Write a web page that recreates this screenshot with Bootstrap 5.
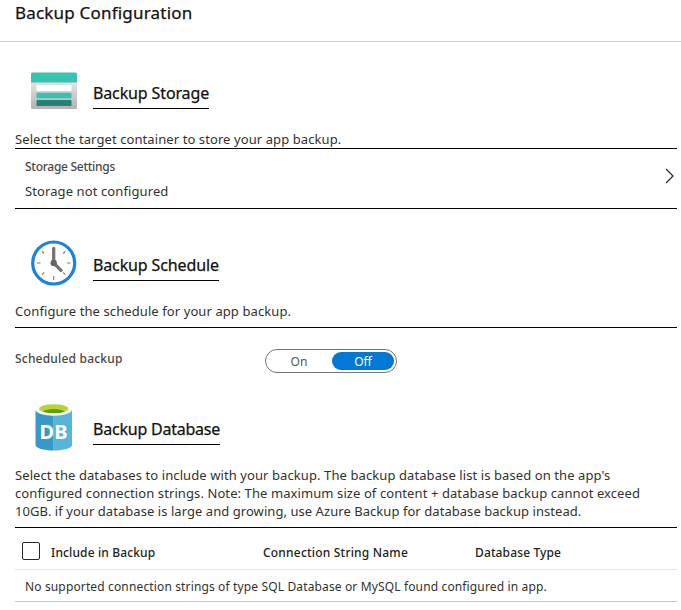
<!DOCTYPE html>
<html lang="en">
<head>
<meta charset="utf-8">
<title>Backup Configuration</title>
<link href="https://cdn.jsdelivr.net/npm/bootstrap@5.3.0/dist/css/bootstrap.min.css" rel="stylesheet">
<style>
body{font-family:"Noto Sans","Open Sans",sans-serif;font-size:13px;line-height:18px;color:#323130;background:#fff;overflow:hidden}
.page-head{height:42px;padding-left:15px;border-bottom:1px solid #d2d0ce}
.page-head h1{font-size:17px;line-height:26px;letter-spacing:.2px;color:#111;-webkit-text-stroke:.25px #111}
.page-body{padding:0 4px 0 15px}
.sect-head{padding-left:16px}
.sect-icon{width:46px;height:48px;margin-right:16px}
.sect-title{font-size:16px;line-height:24px;color:#111;border-bottom:1px solid #000;padding-bottom:3px;letter-spacing:-.13px;-webkit-text-stroke:.25px #111}
.head-storage{height:60px;margin-top:28px}
.head-schedule{height:63px;margin-top:30px}
.head-db{height:63px;margin-top:30px}
.title-storage{margin-top:11px}
.title-schedule{margin-top:14px}
.title-db{margin-top:14px;letter-spacing:-.22px}
.copy{letter-spacing:.09px;white-space:nowrap}
.rule{border-bottom:1px solid #000}
.schedule-copy{padding-bottom:7px}
.setting{height:60px;padding:9px 2px 0 10px}
.lbl{font-size:12px;font-weight:500;color:#484644}
.lbl-storage{letter-spacing:-.27px}
.lbl-sched{letter-spacing:.2px;padding-top:1px}
.value{letter-spacing:.1px;margin-top:6px}
.sched-row{height:45px;padding-top:21px}
.sched-row .lbl{width:250px}
.toggle{width:132px;height:24px;border:1px solid #767472;border-radius:12px;padding:2px;font-size:12px}
.toggle .opt{width:62px;height:18px;line-height:19px;text-align:center;border-radius:9px}
.toggle .opt-on{color:#555}
.toggle .opt-off{background:#0078d4;color:#fff}
.db-copy{height:62px}
.grid-head{height:42px;border-bottom:1px solid #e6e6e6;font-size:12px;font-weight:500;letter-spacing:.13px;color:#222;padding:5px 0 0 7px}
.grid-head span:not(.box){padding-top:4px}
.box{width:18px;height:18px;border:1px solid #292827;border-radius:2px;margin-right:11px}
.col-a{width:212px}
.col-b{width:212px;letter-spacing:.2px}
.empty-row{height:32px;padding:8px 0 0 10px;border-bottom:1px solid #c8c6c4;font-size:12px;letter-spacing:.14px;white-space:nowrap}
.line-c{letter-spacing:.055px}
</style>
<script src="https://cdn.jsdelivr.net/npm/bootstrap@5.3.0/dist/js/bootstrap.bundle.min.js"></script>
</head>
<body>
<header class="page-head"><h1 class="m-0 fw-normal">Backup Configuration</h1></header>
<main class="page-body">

<section>
  <div class="sect-head head-storage d-flex align-items-start">
    <svg class="sect-icon" viewBox="0 0 46 48">
      <defs><linearGradient id="g" x1="0" y1="1" x2="0" y2="0"><stop offset="0" stop-color="#b3b3b3"/><stop offset="1" stop-color="#e4e4e4"/></linearGradient></defs>
      <path d="M0 12H46V37.500Q46 39 44.500 39H1.500Q0 39 0 37.500Z" fill="url(#g)"/>
      <path d="M1.500 2.500H44.500Q46 2.500 46 4V12.500H0V4Q0 2.500 1.500 2.500Z" fill="#37c2b1"/>
      <rect x="5.500" y="15" width="35" height="6" rx=".8" fill="#fff"/>
      <rect x="5.500" y="22.700" width="35" height="5.600" rx=".8" fill="#37c2b1"/>
      <rect x="5.500" y="30" width="35" height="6" rx=".8" fill="#258277"/>
    </svg>
    <h2 class="sect-title title-storage fw-normal mb-0">Backup Storage</h2>
  </div>
  <div class="copy rule">Select the target container to store your app backup.</div>
  <div class="setting rule d-flex justify-content-between">
    <div>
      <div class="lbl lbl-storage">Storage Settings</div>
      <div class="value">Storage not configured</div>
    </div>
    <svg class="mt-2" width="10" height="18" viewBox="0 0 10 18"><path d="M1 3L8 10L1 17" fill="none" stroke="#292827" stroke-width="1.200"/></svg>
  </div>
</section>

<section>
  <div class="sect-head head-schedule d-flex align-items-start">
    <svg class="sect-icon" viewBox="0 0 46 48">
      <circle cx="22.700" cy="24" r="21" fill="#fff" stroke="#1b82de" stroke-width="3.200"/>
      <path d="M22.700 37v4M6 24h3.500M36 24h3.500M11 12.300l2.200 2.200M34.400 12.300l-2.200 2.200M11 35.700l2.200-2.200M34.400 35.700l-2.200-2.200" stroke="#7a7a7a" stroke-width="1.100"/>
      <path d="M22.700 24V9.500M22.700 24L30 31.300" fill="none" stroke="#737373" stroke-width="3.300" stroke-linecap="round"/>
      <circle cx="22.700" cy="24" r="3.200" fill="#666"/>
    </svg>
    <h2 class="sect-title title-schedule fw-normal mb-0">Backup Schedule</h2>
  </div>
  <div class="copy rule schedule-copy">Configure the schedule for your app backup.</div>
  <div class="sched-row d-flex">
    <div class="lbl lbl-sched">Scheduled backup</div>
    <div class="toggle d-flex justify-content-between"><span class="opt opt-on">On</span><span class="opt opt-off">Off</span></div>
  </div>
</section>

<section>
  <div class="sect-head head-db d-flex align-items-start">
    <svg class="sect-icon" viewBox="0 0 46 48">
      <path d="M4.500 7V42C4.500 45 12.500 47.500 22.700 47.500V7Z" fill="#3999c6"/>
      <path d="M22.700 7V47.500C33 47.500 41 45 41 42V7Z" fill="#59b4d9"/>
      <ellipse cx="22.700" cy="6.500" rx="18.200" ry="6.200" fill="#fff"/>
      <ellipse cx="22.700" cy="5.700" rx="14.600" ry="4.500" fill="#b8d432"/>
      <path d="M11.800 8.600C14 6.900 18 6 22.700 6S31.400 6.900 33.600 8.600C31 9.700 27 10.300 22.700 10.300S14.400 9.700 11.800 8.600Z" fill="#59a300"/>
      <text x="22.500" y="35.500" text-anchor="middle" font-family="Noto Sans, sans-serif" font-weight="700" font-size="20" fill="#fff">DB</text>
    </svg>
    <h2 class="sect-title title-db fw-normal mb-0">Backup Database</h2>
  </div>
  <div class="copy rule db-copy">Select the databases to include with your backup. The backup database list is based on the app's<br>configured connection strings. Note: The maximum size of content + database backup cannot exceed<br><span class="line-c">10GB. if your database is large and growing, use Azure Backup for database backup instead.</span></div>
  <div class="grid-head d-flex align-items-center">
    <span class="box"></span><span class="col-a">Include in Backup</span><span class="col-b">Connection String Name</span><span>Database Type</span>
  </div>
  <div class="empty-row">No supported connection strings of type SQL Database or MySQL found configured in app.</div>
</section>
</main>
</body>
</html>
